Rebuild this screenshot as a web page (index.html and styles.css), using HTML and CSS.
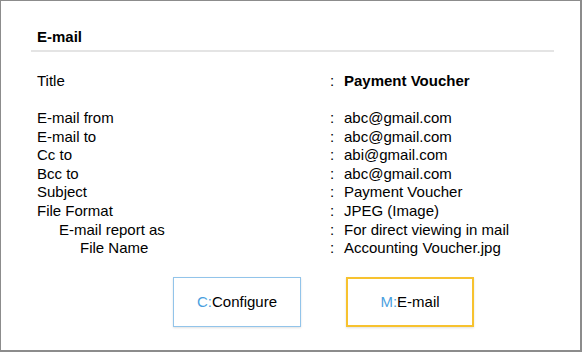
FILE: index.html
```html
<!DOCTYPE html>
<html lang="en">

<head>
    <meta charset="UTF-8">
    <meta name="viewport" content="width=device-width, initial-scale=1.0">
    <title>E-mail</title>
    <link rel="stylesheet" href="styles.css">
</head>

<body>
    <div class="window">
        <!-- Header -->
        <div class="head">E-mail</div>

        <!-- Details -->
        <div class="details">
            <div class="label">Title</div>
            <div class="colon">:</div>
            <div class="value bold">Payment Voucher</div>

            <div class="blank"></div>

            <div class="label">E-mail from</div>
            <div class="colon">:</div>
            <div class="value">abc@gmail.com</div>

            <div class="label">E-mail to</div>
            <div class="colon">:</div>
            <div class="value">abc@gmail.com</div>

            <div class="label">Cc to</div>
            <div class="colon">:</div>
            <div class="value">abi@gmail.com</div>

            <div class="label">Bcc to</div>
            <div class="colon">:</div>
            <div class="value">abc@gmail.com</div>

            <div class="label">Subject</div>
            <div class="colon">:</div>
            <div class="value">Payment Voucher</div>

            <div class="label">File Format</div>
            <div class="colon">:</div>
            <div class="value">JPEG (Image)</div>

            <div class="label indent-1">E-mail report as</div>
            <div class="colon">:</div>
            <div class="value">For direct viewing in mail</div>

            <div class="label indent-2">File Name</div>
            <div class="colon">:</div>
            <div class="value">Accounting Voucher.jpg</div>
        </div>

        <!-- Buttons -->
        <div class="actions">
            <button class="btn btn-config"><span class="key">C:</span>Configure</button>
            <button class="btn btn-mail"><span class="key">M:</span>E-mail</button>
        </div>
    </div>
</body>

</html>
```

FILE: styles.css
```css
* {
    box-sizing: border-box;
    margin: 0;
    padding: 0;
    font-family: "Liberation Sans", Arial, sans-serif;
}

body {
    background: white;
}

.window {
    width: 582px;
    height: 352px;
    background: white;
    border: 1px solid #8c8c8c;
    border-right-width: 2px;
    border-bottom-width: 2px;
    padding: 27px 26px 0 30px;
    color: #000;
}

/* Header */

.head {
    font-size: 15px;
    font-weight: bold;
    line-height: 18px;
    padding: 0 6px 4px;
    border-bottom: 2px solid #e4e4e4;
}

/* Details */

.details {
    display: grid;
    grid-template-columns: 293px 14px 1fr;
    margin-top: 20px;
    padding-left: 6px;
    font-size: 15px;
    line-height: 18.57px;
}

.blank {
    grid-column: 1 / 4;
    height: 18.57px;
}

.bold {
    font-weight: bold;
}

.indent-1 {
    padding-left: 22px;
}

.indent-2 {
    padding-left: 43px;
}

/* Buttons */

.actions {
    display: flex;
    gap: 45px;
    margin: 19px 0 0 142px;
}

.btn {
    width: 128px;
    height: 50px;
    background: white;
    font-size: 15px;
    color: #000;
    box-shadow: 0 1px 2px rgba(0, 0, 0, 0.12);
}

.btn-config {
    border: 1px solid #92c4ea;
}

.btn-mail {
    border: 2px solid #f7c22f;
}

.key {
    color: #4a9fe0;
}
```
